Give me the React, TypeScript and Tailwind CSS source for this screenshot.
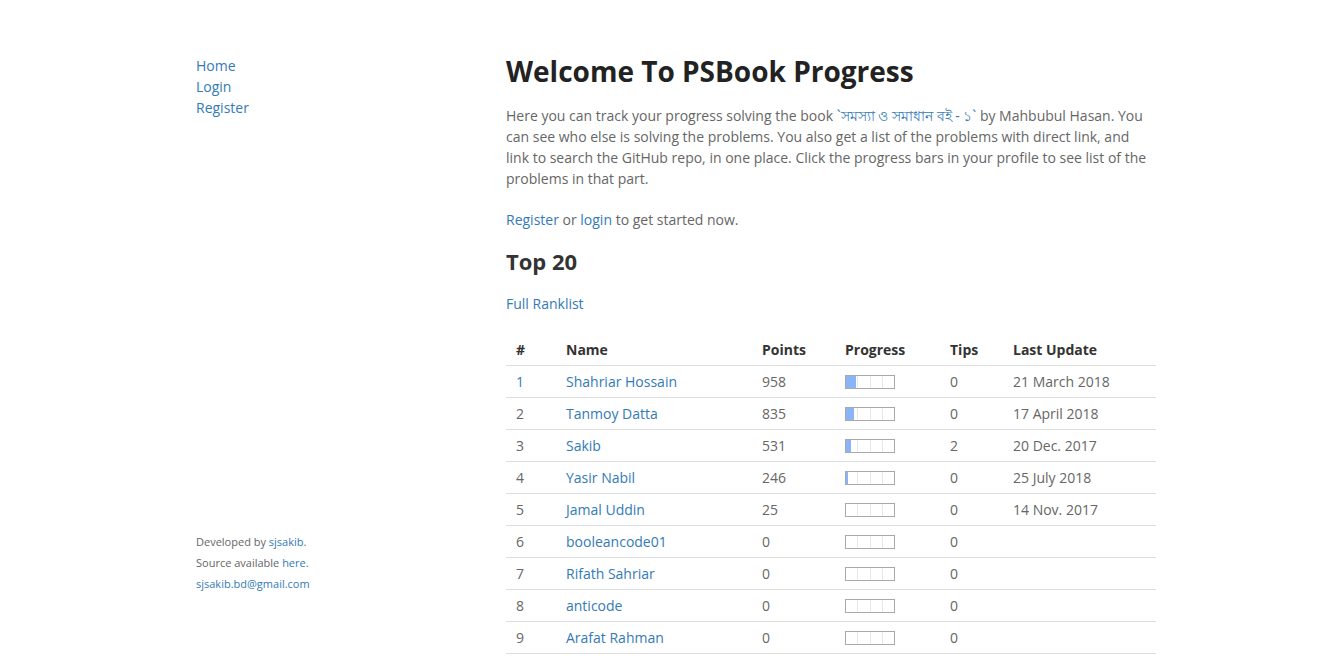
import React from 'react';

type Row = { rank: number; name: string; points: number; fill: number; tips: number; updated: string };

const rows: Row[] = [
  { rank: 1, name: 'Shahriar Hossain', points: 958, fill: 10, tips: 0, updated: '21 March 2018' },
  { rank: 2, name: 'Tanmoy Datta', points: 835, fill: 8, tips: 0, updated: '17 April 2018' },
  { rank: 3, name: 'Sakib', points: 531, fill: 5, tips: 2, updated: '20 Dec. 2017' },
  { rank: 4, name: 'Yasir Nabil', points: 246, fill: 1.5, tips: 0, updated: '25 July 2018' },
  { rank: 5, name: 'Jamal Uddin', points: 25, fill: 0, tips: 0, updated: '14 Nov. 2017' },
  { rank: 6, name: 'booleancode01', points: 0, fill: 0, tips: 0, updated: '' },
  { rank: 7, name: 'Rifath Sahriar', points: 0, fill: 0, tips: 0, updated: '' },
  { rank: 8, name: 'anticode', points: 0, fill: 0, tips: 0, updated: '' },
  { rank: 9, name: 'Arafat Rahman', points: 0, fill: 0, tips: 0, updated: '' },
  { rank: 10, name: 'Nafis Sadique', points: 0, fill: 0, tips: 0, updated: '' },
];

const cols = 'grid grid-cols-[50px_196px_83px_105px_63px_153px] items-center';

const ProgressBar: React.FC<{ fill: number }> = ({ fill }) => (
  <div className="relative w-[50px] h-[14px] border border-[#a9a9a9] flex">
    <div className="flex-1" />
    <div className="flex-1 border-l border-[#e8e8e8]" />
    <div className="flex-1 border-l border-[#e8e8e8]" />
    <div className="flex-1 border-l border-[#e8e8e8]" />
    {/* filled part */}
    <div className="absolute left-0 top-0 bottom-0 bg-[#8ab4f8]" style={{ width: fill }} />
  </div>
);

const App: React.FC = () => {
  return (
    <div className="min-h-screen bg-white font-['Open_Sans','Noto_Sans',sans-serif] text-[14px] leading-[21px] text-[#666]">
      <div className="flex pl-[196px]">
        {/* Sidebar */}
        <aside className="w-[310px] shrink-0 pt-[55px] flex flex-col">
          <nav className="flex flex-col text-[14px] leading-[21px] text-[#337ab7]">
            <a href="#">Home</a>
            <a href="#">Login</a>
            <a href="#">Register</a>
          </nav>
          <div className="mt-[413px] text-[11px] leading-[21px] text-[#666]">
            <p>Developed by <a href="#" className="text-[#337ab7]">sjsakib</a>.</p>
            <p>Source available <a href="#" className="text-[#337ab7]">here</a>.</p>
            <p><a href="#" className="text-[#337ab7]">sjsakib.bd@gmail.com</a></p>
          </div>
        </aside>

        {/* Main */}
        <main className="w-[650px] pt-[53px]">
          <h1 className="text-[28px] leading-[36px] font-bold text-[#222]">Welcome To PSBook Progress</h1>
          <p className="mt-[16px] pr-[6px]">
            Here you can track your progress solving the book{' '}
            <a href="#" className="text-[#337ab7] font-['Noto_Sans','Open_Sans',sans-serif]">`সমস্যা ও সমাধান বই - ১`</a> by Mahbubul
            Hasan. You can see who else is solving the problems. You also get a list of the problems with direct link,
            and link to search the GitHub repo, in one place. Click the progress bars in your profile to see list of the
            problems in that part.
          </p>
          <p className="mt-[20px]">
            <a href="#" className="text-[#337ab7]">Register</a> or <a href="#" className="text-[#337ab7]">login</a> to get
            started now.
          </p>
          <h2 className="mt-[18px] text-[22px] leading-[26px] font-bold text-[#333]">Top 20</h2>
          <p className="mt-[19px]">
            <a href="#" className="text-[#337ab7]">Full Ranklist</a>
          </p>

          <div className="mt-[21px]">
            <div className={`${cols} h-[30px] pb-[2px] font-bold text-[#333]`}>
              <div className="pl-[10px]">#</div>
              <div className="pl-[10px]">Name</div>
              <div className="pl-[10px]">Points</div>
              <div className="pl-[10px]">Progress</div>
              <div className="pl-[10px]">Tips</div>
              <div className="pl-[10px]">Last Update</div>
            </div>
            {rows.map((r) => (
              <div key={r.rank} className={`${cols} h-[32px] border-t border-[#ddd]`}>
                <div className="pl-[10px]">{r.rank === 1 ? <span className="text-[#337ab7]">1</span> : r.rank}</div>
                <div className="pl-[10px]">
                  <a href="#" className="text-[#337ab7]">{r.name}</a>
                </div>
                <div className="pl-[10px]">{r.points}</div>
                <div className="pl-[10px]">
                  <ProgressBar fill={r.fill} />
                </div>
                <div className="pl-[10px]">{r.tips}</div>
                <div className="pl-[10px]">{r.updated}</div>
              </div>
            ))}
          </div>
        </main>
      </div>
    </div>
  );
};

export default App;
